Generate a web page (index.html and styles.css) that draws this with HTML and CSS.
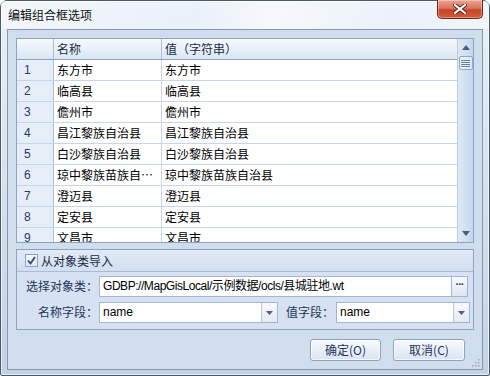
FILE: index.html
```html
<!DOCTYPE html>
<html>
<head>
<meta charset="utf-8">
<link rel="stylesheet" href="styles.css">
</head>
<body>
<div class="window">
  <div class="titlebar">
    <span class="title">编辑组合框选项</span>
    <div class="close">
      <svg width="14" height="10" viewBox="0 0 14 10">
        <path d="M2 1 L12 9 M12 1 L2 9" stroke="#5a1a10" stroke-width="4" stroke-linecap="square"/>
        <path d="M2 1 L12 9 M12 1 L2 9" stroke="#ffffff" stroke-width="2.2" stroke-linecap="square"/>
      </svg>
    </div>
  </div>
  <div class="client">
    <div class="grid">
      <div class="grid-body">
        <div class="row head"><div class="c rh"></div><div class="c name">名称</div><div class="c val">值（字符串）</div></div>
        <div class="row"><div class="c rh">1</div><div class="c name">东方市</div><div class="c val">东方市</div></div>
        <div class="row"><div class="c rh">2</div><div class="c name">临高县</div><div class="c val">临高县</div></div>
        <div class="row"><div class="c rh">3</div><div class="c name">儋州市</div><div class="c val">儋州市</div></div>
        <div class="row"><div class="c rh">4</div><div class="c name">昌江黎族自治县</div><div class="c val">昌江黎族自治县</div></div>
        <div class="row"><div class="c rh">5</div><div class="c name">白沙黎族自治县</div><div class="c val">白沙黎族自治县</div></div>
        <div class="row"><div class="c rh">6</div><div class="c name">琼中黎族苗族自治县</div><div class="c val">琼中黎族苗族自治县</div></div>
        <div class="row"><div class="c rh">7</div><div class="c name">澄迈县</div><div class="c val">澄迈县</div></div>
        <div class="row"><div class="c rh">8</div><div class="c name">定安县</div><div class="c val">定安县</div></div>
        <div class="row"><div class="c rh">9</div><div class="c name">文昌市</div><div class="c val">文昌市</div></div>
      </div>
      <div class="vscroll">
        <svg class="arrow" width="8" height="5" viewBox="0 0 8 5"><path d="M0 5 L4 0 L8 5 Z" fill="#4c5d7d"/></svg>
        <div class="thumb">
          <svg width="9" height="7" viewBox="0 0 9 7"><path d="M0 0.5 H9 M0 2.5 H9 M0 4.5 H9 M0 6.5 H9" stroke="#6b7f9e" stroke-width="1"/></svg>
        </div>
        <div class="track"></div>
        <svg class="arrow" width="8" height="5" viewBox="0 0 8 5"><path d="M0 0 L8 0 L4 5 Z" fill="#4c5d7d"/></svg>
      </div>
    </div>

    <div class="group">
      <div class="group-head">
        <span class="check">
          <svg width="11" height="11" viewBox="0 0 11 11"><path d="M2 5.5 L4.5 8.5 L9 2" fill="none" stroke="#2b4a7c" stroke-width="1.8"/></svg>
        </span>
        <span class="group-title">从对象类导入</span>
      </div>
      <div class="group-body">
        <div class="frow">
          <label class="lbl lbl1">选择对象类：</label>
          <div class="input path">GDBP://MapGisLocal/示例数据/ocls/县城驻地.wt</div>
          <div class="dots">···</div>
        </div>
        <div class="frow">
          <label class="lbl lbl1">名称字段：</label>
          <div class="combo c1"><span class="ctext">name</span><span class="drop"><svg width="7" height="4" viewBox="0 0 7 4"><path d="M0 0 H7 L3.5 4 Z" fill="#4c5d7d"/></svg></span></div>
          <label class="lbl lbl2">值字段：</label>
          <div class="combo c2"><span class="ctext">name</span><span class="drop"><svg width="7" height="4" viewBox="0 0 7 4"><path d="M0 0 H7 L3.5 4 Z" fill="#4c5d7d"/></svg></span></div>
        </div>
      </div>
    </div>

    <div class="buttons">
      <div class="btn ok">确定(O)</div>
      <div class="btn">取消(C)</div>
    </div>
    <svg class="grip" width="8" height="8" viewBox="0 0 8 8">
      <rect x="6" y="0" width="1.5" height="1.5" fill="#9aa9bd"/>
      <rect x="3" y="3" width="1.5" height="1.5" fill="#9aa9bd"/>
      <rect x="6" y="3" width="1.5" height="1.5" fill="#9aa9bd"/>
      <rect x="0" y="6" width="1.5" height="1.5" fill="#9aa9bd"/>
      <rect x="3" y="6" width="1.5" height="1.5" fill="#9aa9bd"/>
      <rect x="6" y="6" width="1.5" height="1.5" fill="#9aa9bd"/>
    </svg>
  </div>
</div>
</body>
</html>
```

FILE: styles.css
```css
* { box-sizing: border-box; }
html, body { margin: 0; padding: 0; }
body {
  width: 490px;
  height: 376px;
  overflow: hidden;
  font-family: "Liberation Sans", "Noto Sans CJK SC", sans-serif;
  font-size: 12px;
  background: #ffffff;
}
.window {
  width: 490px;
  height: 376px;
  border: 1px solid #4f5a67;
  border-radius: 7px 7px 2px 2px;
  background: linear-gradient(180deg, #e9f0f8 0%, #dde7f3 30%, #cfdbea 70%, #c3d1e3 100%);
  display: flex;
  flex-direction: column;
  box-shadow: inset 0 0 0 1px rgba(255,255,255,0.6);
}
.titlebar {
  height: 28px;
  display: flex;
  align-items: flex-start;
  justify-content: space-between;
  padding-left: 7px;
  padding-right: 6px;
  background: linear-gradient(100deg, rgba(255,255,255,0.5) 0%, rgba(255,255,255,0.1) 40%, rgba(255,255,255,0.6) 55%, rgba(255,255,255,0.2) 80%, rgba(255,255,255,0.4) 100%);
}
.title {
  font-family: "Noto Sans CJK SC", sans-serif;
  font-size: 12px;
  color: #111;
  margin-top: 6px;
  line-height: 16px;
}
.close {
  width: 46px;
  height: 19px;
  margin-top: -1px;
  border: 1px solid #6e2418;
  border-top: none;
  border-radius: 0 0 5px 5px;
  background: linear-gradient(180deg, #e9a593 0%, #d9745c 45%, #c6442a 55%, #d45a3a 100%);
  display: flex;
  align-items: center;
  justify-content: center;
  box-shadow: inset 0 0 0 1px rgba(255,255,255,0.35);
}
.client {
  position: relative;
  margin: 0 6px;
  height: 341px;
  border: 1px solid #8797ae;
  background: #d0dded;
  padding: 8px 8px 0 8px;
  display: flex;
  flex-direction: column;
}
.grid {
  height: 205px;
  border: 1px solid #8ea3c0;
  background: #ffffff;
  display: flex;
  overflow: hidden;
}
.grid-body {
  width: 440px;
  display: flex;
  flex-direction: column;
  overflow: hidden;
}
.row {
  display: flex;
  height: 21px;
  flex-shrink: 0;
  border-bottom: 1px solid #c4d6ee;
}
.row .c {
  height: 20px;
  line-height: 20px;
  font-family: "Noto Sans CJK SC", sans-serif;
  color: #000;
  white-space: nowrap;
  overflow: hidden;
  text-overflow: ellipsis;
}
.c.rh {
  width: 37px;
  border-right: 1px solid #a9bedb;
  background: #e6eef8;
  padding-left: 7px;
  font-family: "Liberation Sans", sans-serif;
  color: #243a6a;
}
.c.name {
  width: 108px;
  border-right: 1px solid #c4d6ee;
  padding-left: 3px;
  padding-right: 2px;
}
.c.val {
  flex: 1;
  padding-left: 3px;
}
.row.head {
  border-bottom: 1px solid #8ea3c0;
  background: linear-gradient(180deg, #f6f9fd 0%, #e8f0f9 50%, #dbe6f3 100%);
}
.row.head .c { background: transparent; color: #1b2a44; }
.row.head .c.name { border-right-color: #a9bedb; }
.vscroll {
  width: 16px;
  border-left: 1px solid #b8cbe4;
  background: linear-gradient(90deg, #dfe8f4 0%, #d3e0f0 50%, #c6d6ec 100%);
  display: flex;
  flex-direction: column;
  align-items: center;
}
.vscroll .arrow { margin-top: 6px; flex-shrink: 0; }
.vscroll .arrow:last-child { margin-top: 0; margin-bottom: 6px; }
.thumb {
  width: 14px;
  height: 14px;
  margin-top: 6px;
  border: 1px solid #8ea8cb;
  border-radius: 2px;
  background: linear-gradient(90deg, #eef3fa 0%, #dae5f3 100%);
  display: flex;
  align-items: center;
  justify-content: center;
}
.track { flex: 1; }

.group {
  margin-top: 6px;
  height: 81px;
  border: 1px solid #8ea3c0;
  background: #d6e2f1;
  display: flex;
  flex-direction: column;
}
.group-head {
  height: 22px;
  border-bottom: 1px solid #a9bcd6;
  background: linear-gradient(180deg, #e1eaf6 0%, #d3dff0 100%);
  display: flex;
  align-items: center;
  padding-left: 8px;
}
.check {
  width: 13px;
  height: 13px;
  border: 1px solid #8fa1bb;
  background: linear-gradient(180deg, #f4f7fb, #dfe7f2);
  display: flex;
  align-items: center;
  justify-content: center;
}
.group-title {
  margin-left: 3px;
  font-family: "Noto Sans CJK SC", sans-serif;
  color: #1b2a44;
  line-height: 16px;
}
.group-body {
  padding: 4px 0 0 0;
  display: flex;
  flex-direction: column;
  gap: 5px;
}
.frow {
  display: flex;
  height: 21px;
  align-items: stretch;
}
.lbl {
  font-family: "Noto Sans CJK SC", sans-serif;
  color: #1e3559;
  text-align: right;
  line-height: 20px;
  padding-right: 1px;
  white-space: nowrap;
}
.lbl1 { width: 82px; }
.lbl2 { width: 58px; padding-right: 2px; }
.input {
  width: 353px;
  border: 1px solid #a3b6d1;
  background: #ffffff;
  line-height: 19px;
  padding-left: 3px;
  color: #000;
  white-space: nowrap;
  overflow: hidden;
  letter-spacing: -0.45px;
  font-family: "Liberation Sans", "Noto Sans CJK SC", sans-serif;
}
.dots {
  width: 16px;
  border: 1px solid #a3b6d1;
  border-left: none;
  background: linear-gradient(180deg, #f7f9fc, #dde6f2);
  color: #334;
  text-align: center;
  font-weight: bold;
  line-height: 15px;
  font-size: 11px;
  letter-spacing: -1px;
}
.combo {
  border: 1px solid #a3b6d1;
  background: #ffffff;
  display: flex;
}
.combo.c1 { width: 179px; }
.combo.c2 { width: 134px; }
.ctext {
  flex: 1;
  padding-left: 3px;
  line-height: 19px;
  color: #000;
}
.drop {
  width: 16px;
  border-left: 1px solid #b6c7dd;
  background: linear-gradient(180deg, #f7f9fc, #e3eaf4);
  display: flex;
  align-items: center;
  justify-content: center;
}
.buttons {
  margin-top: 9px;
  display: flex;
  justify-content: flex-end;
  gap: 12px;
  padding-right: 9px;
}
.btn {
  width: 72px;
  height: 22px;
  border: 1px solid #8ea3c0;
  border-radius: 3px;
  background: linear-gradient(180deg, #f8fafd 0%, #e8eff8 50%, #d9e4f2 100%);
  color: #1e3559;
  text-align: center;
  line-height: 20px;
  font-family: "Noto Sans CJK SC", sans-serif;
  box-shadow: inset 0 0 0 1px rgba(255,255,255,0.7);
}
.btn.ok { width: 71px; }
.grip {
  position: absolute;
  right: 2px;
  bottom: 2px;
}
```
